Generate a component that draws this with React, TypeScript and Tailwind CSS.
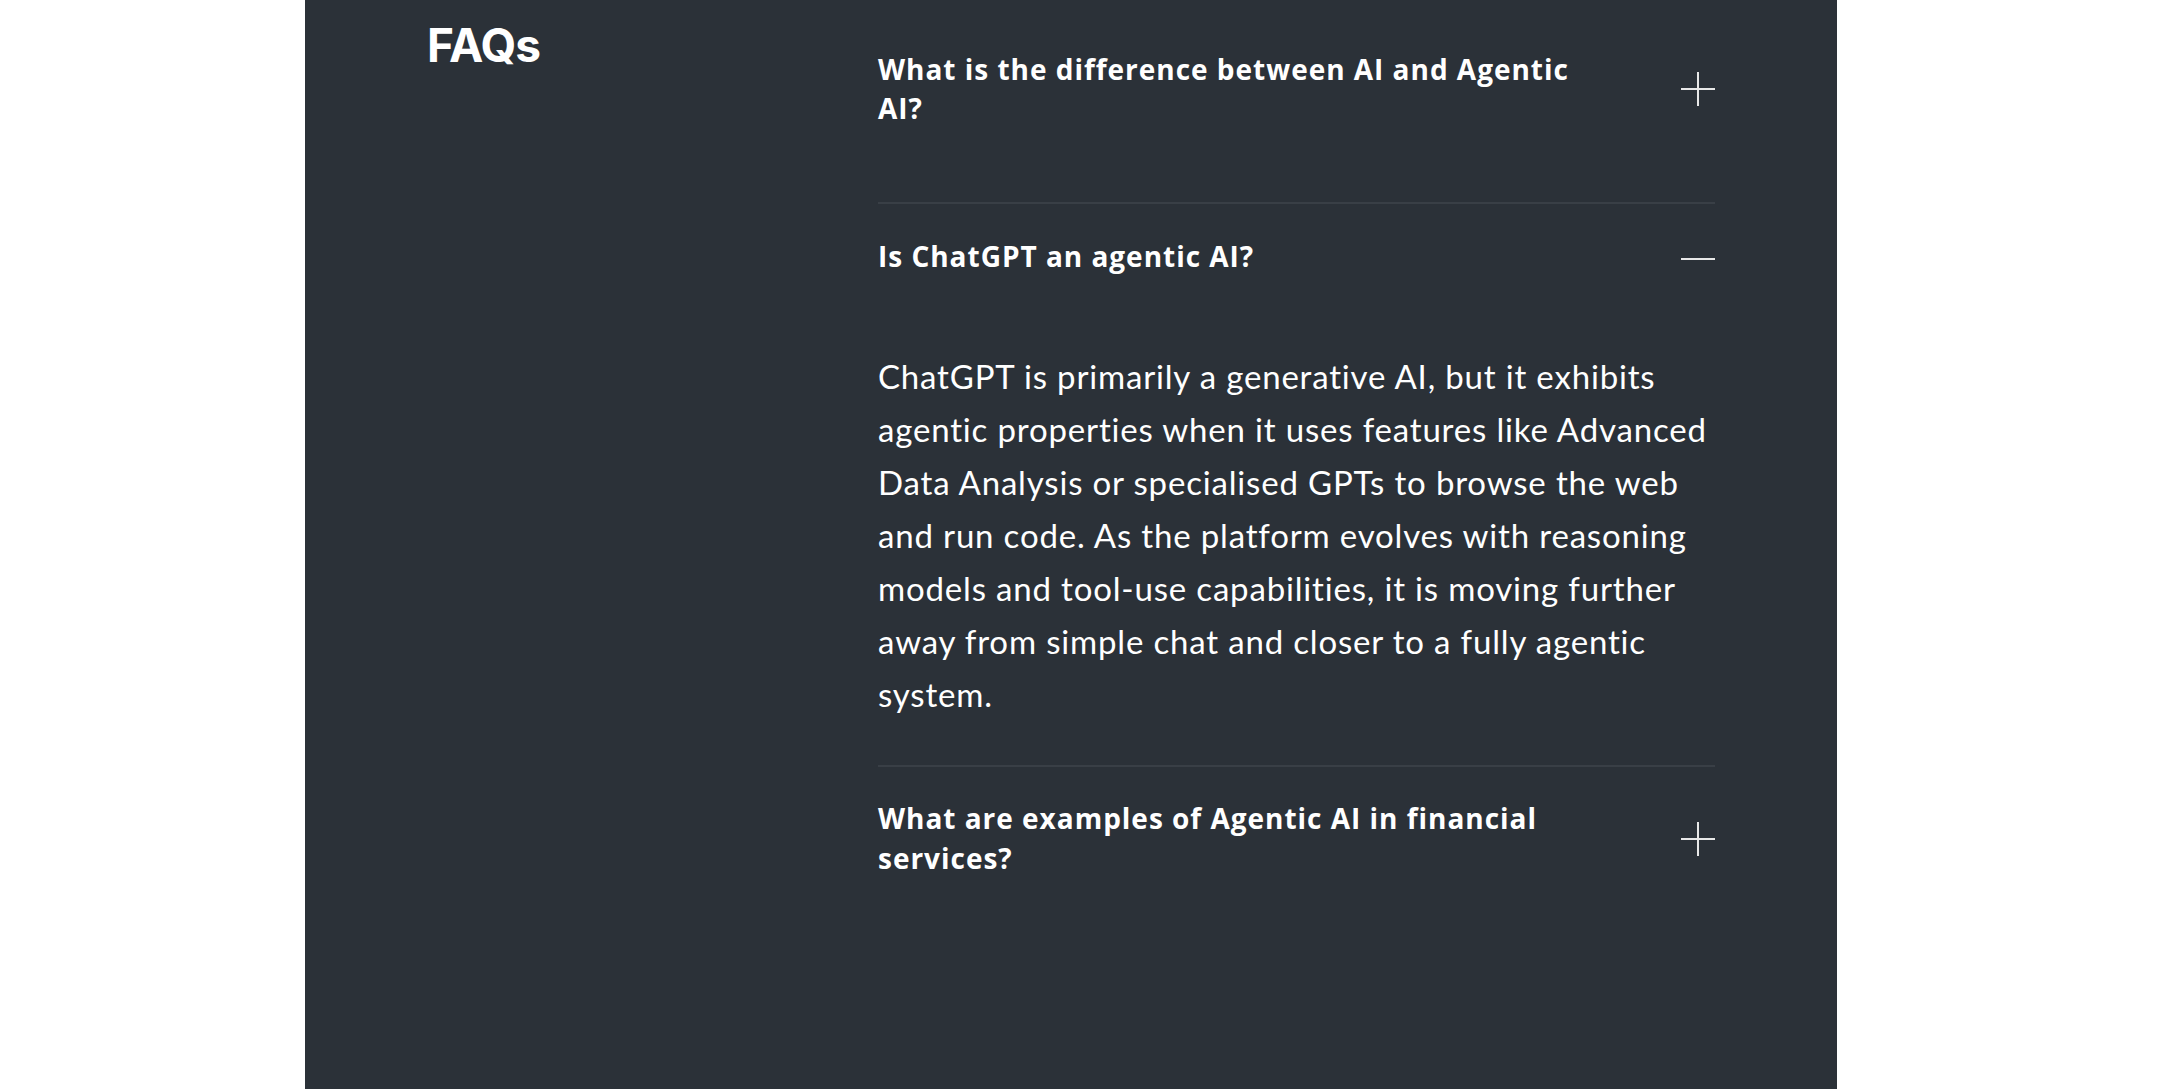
import { useState } from "react";

const FAQS = [
  {
    q: "What is the difference between AI and Agentic AI?",
    a: "Traditional AI responds to a prompt and stops. Agentic AI can plan, take actions with tools and work towards a goal over several steps with limited supervision.",
  },
  {
    q: "Is ChatGPT an agentic AI?",
    a: "ChatGPT is primarily a generative AI, but it exhibits agentic properties when it uses features like Advanced Data Analysis or specialised GPTs to browse the web and run code. As the platform evolves with reasoning models and tool-use capabilities, it is moving further away from simple chat and closer to a fully agentic system.",
  },
  {
    q: "What are examples of Agentic AI in financial services?",
    a: "Examples include agents that reconcile accounts, monitor transactions for fraud, prepare compliance reports and handle routine customer requests end to end.",
  },
];

export default function App() {
  const [open, setOpen] = useState<number | null>(1);

  return (
    <div className="flex min-h-screen bg-white">
      <div className="w-[305px] shrink-0" />
      <section className="flex min-h-screen w-[1532px] shrink-0 bg-[#2b3138] pt-[18px] pr-[122px] pb-24 pl-[120px]">
        <div className="w-[453px] shrink-0 pl-[2px]">
          <h2 className="font-['Inter',sans-serif] text-[46px] font-bold leading-[1.2] tracking-[-0.02em] text-white">
            FAQs
          </h2>
        </div>

        <div className="flex w-[837px] flex-col">
          {FAQS.map((item, i) => (
            <FaqItem
              key={item.q}
              question={item.q}
              answer={item.a}
              open={open === i}
              last={i === FAQS.length - 1}
              onToggle={() => setOpen((v) => (v === i ? null : i))}
            />
          ))}
        </div>
      </section>
    </div>
  );
}

function FaqItem({
  question,
  answer,
  open,
  last,
  onToggle,
}: {
  question: string;
  answer: string;
  open: boolean;
  last: boolean;
  onToggle: () => void;
}) {
  return (
    <div className={last ? "" : "border-b-2 border-[#393f46]"}>
      <button
        type="button"
        onClick={onToggle}
        aria-expanded={open}
        className="flex w-full items-center justify-between pt-8 pb-[74px] text-left"
      >
        <span className="w-[715px] font-['Open_Sans',sans-serif] text-[28px] font-bold leading-[1.4] tracking-[0.035em] text-white">
          {question}
        </span>
        {open ? <MinusIcon /> : <PlusIcon />}
      </button>

      {open && (
        <p className="pb-[44px] font-['Lato',sans-serif] text-[33px] leading-[53px] tracking-[0.025em] text-white">
          {answer}
        </p>
      )}
    </div>
  );
}

function PlusIcon() {
  return (
    <svg width="34" height="34" viewBox="0 0 34 34" className="shrink-0 text-[#e8e8e8]">
      <path d="M17 0v34M0 17h34" stroke="currentColor" strokeWidth="2" fill="none" />
    </svg>
  );
}

function MinusIcon() {
  return (
    <svg width="34" height="34" viewBox="0 0 34 34" className="mt-[6px] shrink-0 text-[#e8e8e8]">
      <path d="M0 17h34" stroke="currentColor" strokeWidth="2" fill="none" />
    </svg>
  );
}
